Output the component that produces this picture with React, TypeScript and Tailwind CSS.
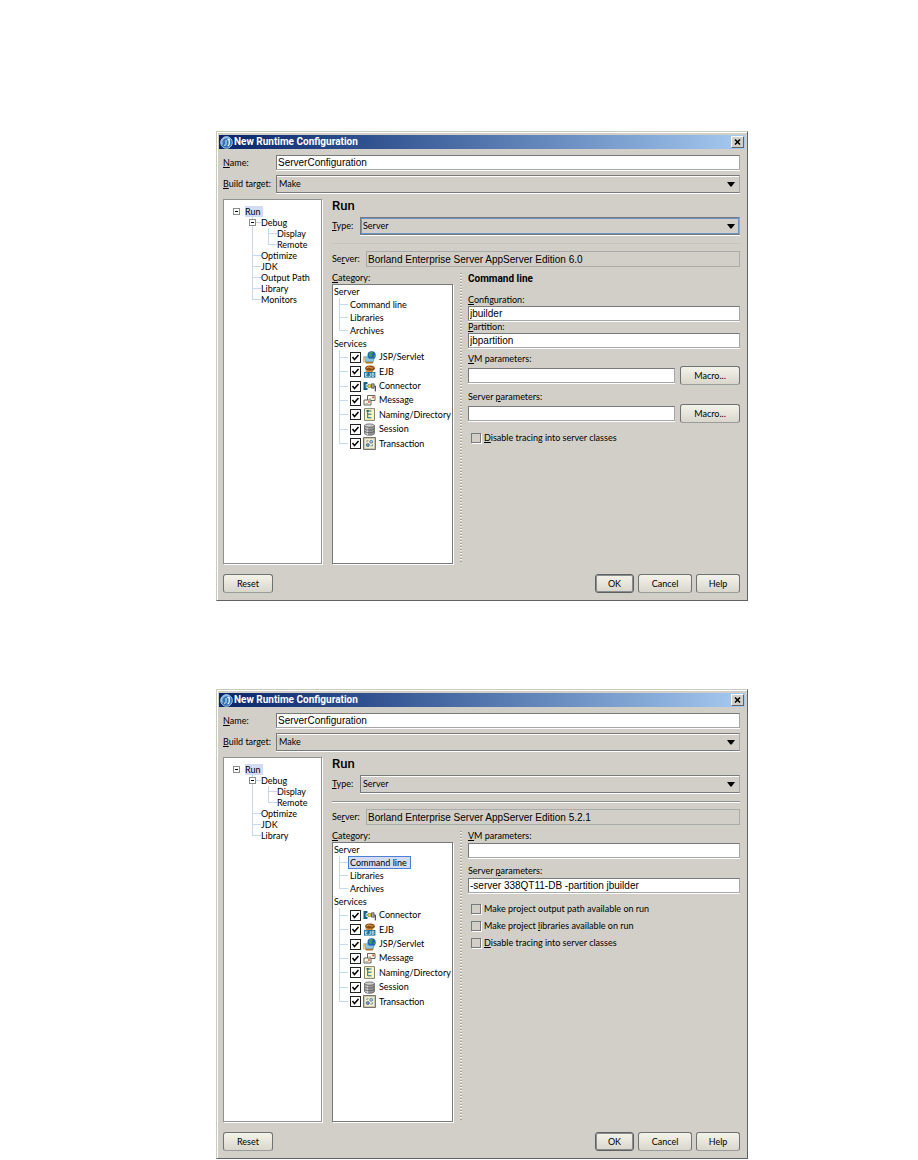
import { useId, type ReactNode } from "react";
import clsx from "clsx";

/* ------------------------------------------------------------------ */
/* Data                                                                */
/* ------------------------------------------------------------------ */

type Guide = "none" | "pipe" | "tee" | "elbow";

type TreeRow = {
  label: string;
  guides: Guide[];
  open?: boolean;
  selected?: boolean;
};

type ServiceName =
  | "JSP/Servlet"
  | "EJB"
  | "Connector"
  | "Message"
  | "Naming/Directory"
  | "Session"
  | "Transaction";

const treeTop: TreeRow[] = [
  { label: "Run", guides: ["none"], open: true, selected: true },
  { label: "Debug", guides: ["none", "tee"], open: true },
  { label: "Display", guides: ["none", "pipe", "tee"] },
  { label: "Remote", guides: ["none", "pipe", "elbow"] },
  { label: "Optimize", guides: ["none", "tee"] },
  { label: "JDK", guides: ["none", "tee"] },
];

const treeV6: TreeRow[] = [
  ...treeTop,
  { label: "Output Path", guides: ["none", "tee"] },
  { label: "Library", guides: ["none", "tee"] },
  { label: "Monitors", guides: ["none", "elbow"] },
];

const treeV5: TreeRow[] = [...treeTop, { label: "Library", guides: ["none", "elbow"] }];

const servicesV6: ServiceName[] = [
  "JSP/Servlet",
  "EJB",
  "Connector",
  "Message",
  "Naming/Directory",
  "Session",
  "Transaction",
];

const servicesV5: ServiceName[] = [
  "Connector",
  "EJB",
  "JSP/Servlet",
  "Message",
  "Naming/Directory",
  "Session",
  "Transaction",
];

/* ------------------------------------------------------------------ */
/* Icons                                                               */
/* ------------------------------------------------------------------ */

function AppIcon() {
  return (
    <svg viewBox="0 0 13 13" className="size-[13px] shrink-0" aria-hidden="true">
      <circle cx="6.5" cy="6.5" r="5.8" fill="#2f74b8" stroke="#b9cde2" strokeWidth="1" />
      <path d="M2.4 8.5A4.6 4.6 0 0 1 9.5 2.8" stroke="#8fc1ec" strokeWidth="1.5" fill="none" />
      <path d="M6 4v4.4q-.2 1.2-2 .8" stroke="#dcebf8" strokeWidth="1" fill="none" />
      <path d="M7.4 3.6h1.8v4.2q0 1.8-1.6 2.2" stroke="#fff" strokeWidth="1.2" fill="none" />
    </svg>
  );
}

// 13px glyphs, one for each service in the category tree.
const serviceGlyphs: Record<ServiceName, ReactNode> = {
  "JSP/Servlet": (
    <>
      <circle cx="8.6" cy="4.4" r="4.1" fill="#2458cc" />
      <path d="M6 1.4l3-.9 1.2 1.6-1.6 1.2.8 1.8-2 1.4-1.8-2z" fill="#35a050" />
      <path d="M10.8 4l1.6.6-.8 2-1.2-.6z" fill="#35a050" />
      <path d="M1 5.8h3.6l1.4 1.8h5l-1 3.6H2.6z" fill="#8fc4dc" stroke="#3c86a8" strokeWidth=".6" />
      <path d="M0 5.4h1.6v6.2H0z" fill="#e8c070" />
      <path d="M2.2 10.8h8.4l-1 1.6H3z" fill="#a9752c" />
    </>
  ),
  EJB: (
    <>
      <ellipse cx="7" cy="3.3" rx="4.8" ry="2.8" fill="#8a4a12" />
      <path d="M3.5 3.2q2-2 4-.6t3-.5" stroke="#e6b060" strokeWidth="1" fill="none" />
      <path d="M2 5.5h8.5l-1 1.6H3z" fill="#d08a3a" />
      <rect x="1" y="7" width="11.4" height="5.6" fill="#1c7296" />
      <path
        d="M4.5 8.2H2.4v3.2h2.1M2.4 9.8h1.8M7.3 8v3.4H5.5M9 8.2v3.2h1.6q1-.8 0-1.6 1-.8 0-1.6zM9 9.8h1.4"
        stroke="#e2f2f8"
        strokeWidth=".8"
        fill="none"
      />
    </>
  ),
  Connector: (
    <>
      <path d="M.5 2h4v2H3v4h1.5v2h-4z" fill="#145f86" />
      <path d="M2.5 4.5h2v3h-2z" fill="#7cc0dc" />
      <circle cx="6.4" cy="6" r="1.7" fill="#f4e020" stroke="#54541c" strokeWidth=".6" />
      <path d="M8.5 3.8h2.6v4.4H8.5z" fill="#a6a6a6" stroke="#444" strokeWidth=".7" />
      <path d="M11.5 6h.8v5.4" stroke="#222" strokeWidth="1" fill="none" />
    </>
  ),
  Message: (
    <>
      <path d="M4.5 1.5h7.5v5H4.5z" fill="#fffbe6" stroke="#55584c" strokeWidth=".9" />
      <path d="M9.3 2.6h1.6v1.6H9.3z" fill="#c83a2c" />
      <path d="M1 6h7v5H1z" fill="#fffbe6" stroke="#55584c" strokeWidth=".9" />
      <path d="M5.2 7.2h1.6v1.6H5.2z" fill="#c83a2c" />
      <path d="M2.4 9.4h3M6 5h2.4" stroke="#8d9184" strokeWidth=".7" />
    </>
  ),
  "Naming/Directory": (
    <>
      <path d="M1.5.6h10v11.8h-10z" fill="#fbf6c4" stroke="#77765e" strokeWidth=".9" />
      <path d="M4.7 2.5v7.5M4.7 3h3.8M4.7 6.2h3.8M4.7 9.8h3.8" stroke="#206a86" strokeWidth="1" fill="none" />
      <path d="M3.4 2h2.4v1.6H3.4z" fill="#206a86" />
    </>
  ),
  Session: (
    <>
      <path d="M1.6 2.6v7.8c0 2.4 9.8 2.4 9.8 0V2.6z" fill="#9b9b9b" stroke="#4a4a4a" strokeWidth=".7" />
      <path d="M3 4v7.4M4.6 4.4v7.6" stroke="#dedede" strokeWidth="1" />
      <ellipse cx="6.5" cy="2.6" rx="4.9" ry="1.7" fill="#cfcfcf" stroke="#4a4a4a" strokeWidth=".7" />
      <path d="M1.6 5.4c0 2.2 9.8 2.2 9.8 0M1.6 8c0 2.2 9.8 2.2 9.8 0" stroke="#4a4a4a" strokeWidth=".7" fill="none" />
    </>
  ),
  Transaction: (
    <>
      <path d="M.5.5h12v12H.5z" fill="#c9c6b4" stroke="#6c6a5c" strokeWidth=".9" />
      <path d="M2.2 2.2h8.6v8.6H2.2z" fill="#fdf9d8" />
      <circle cx="4.8" cy="8" r="1.6" fill="#6d9cc4" stroke="#224a70" strokeWidth=".6" />
      <circle cx="8.2" cy="4.8" r="1.5" fill="#a8cbe4" stroke="#224a70" strokeWidth=".6" />
      <path d="M7.2 9h2.2V7.2M3.8 5.2V3.8h1.8" stroke="#3c6488" strokeWidth=".7" fill="none" />
    </>
  ),
};

function ServiceIcon({ name }: { name: ServiceName }) {
  return (
    <svg viewBox="0 0 13 13" className="size-[13px] shrink-0" aria-hidden="true">
      {serviceGlyphs[name]}
    </svg>
  );
}

/* ------------------------------------------------------------------ */
/* Form controls                                                       */
/* ------------------------------------------------------------------ */

function TextField({ id, value, readOnly, className }: { id: string; value?: string; readOnly?: boolean; className?: string }) {
  return (
    <input
      id={id}
      type="text"
      defaultValue={value}
      readOnly={readOnly}
      className={clsx(
        "min-w-0 border px-px font-[Liberation_Sans,Arial,sans-serif] text-[10px] leading-3 text-black outline-none",
        readOnly
          ? "h-4 border-[#a9abab] bg-transparent"
          : "h-[15px] border-[#a6a8a8] border-t-[#77797a] border-l-[#77797a] bg-white shadow-[0_1px_0_#fff]",
        className,
      )}
    />
  );
}

function SelectField({ id, value, focused }: { id: string; value: string; focused?: boolean }) {
  return (
    <div className="relative min-w-0 flex-1">
      <select
        id={id}
        defaultValue={value}
        className={clsx(
          "block h-[18px] w-full appearance-none border border-[#77797a] border-r-[#a6a8a8] bg-[#d1cfc7] px-0.5 text-[9px] leading-3 text-black outline-none",
          focused ? "shadow-[inset_0_0_0_1px_#6c92cc,0_1px_0_#fff]" : "shadow-[inset_0_1px_0_#fff,0_1px_0_#fff]",
        )}
      >
        <option>{value}</option>
      </select>
      <svg viewBox="0 0 8 5" className="pointer-events-none absolute top-[7px] right-[5px] h-[5px] w-2" aria-hidden="true">
        <path d="M0 0h8L4.6 4.6h-1.2z" fill="#000" />
      </svg>
    </div>
  );
}

function PushButton({ children, primary, className }: { children: ReactNode; primary?: boolean; className?: string }) {
  return (
    <button
      type="button"
      className={clsx(
        "h-[19px] shrink-0 rounded-[3px] border bg-linear-to-b from-[#f4f3ea] to-[#d9d7cc] text-[9px] leading-3 text-black",
        primary
          ? "border-[#5f6163] shadow-[inset_0_0_0_1px_#8b8d8d]"
          : "border-[#6f7173] border-b-[#9a9c9c]",
        className,
      )}
    >
      {children}
    </button>
  );
}

function OptionBox({ children }: { children: ReactNode }) {
  const id = useId();
  return (
    <div className="flex h-[11px] items-center gap-[3px] pl-[3px]">
      <input
        id={id}
        type="checkbox"
        className="size-[10px] shrink-0 appearance-none border border-[#77797a] bg-transparent shadow-[1px_1px_0_#fff]"
      />
      <label htmlFor={id}>{children}</label>
    </div>
  );
}

function ServiceRow({ name, last }: { name: ServiceName; last: boolean }) {
  const id = useId();
  return (
    <li className="flex items-center pl-1.5">
      <GuideCell kind={last ? "elbow" : "tee"} own />
      <span className="relative ml-0.5 size-[11px] shrink-0">
        <input
          id={id}
          type="checkbox"
          defaultChecked
          className="peer block size-[11px] appearance-none border border-[#222] bg-white"
        />
        <svg viewBox="0 0 11 11" className="pointer-events-none absolute inset-0 hidden peer-checked:block" aria-hidden="true">
          <path d="M2.5 5l2 2.5L8.5 3" stroke="#000" strokeWidth="1.5" fill="none" />
        </svg>
      </span>
      <label htmlFor={id} className="ml-0.5 flex items-center gap-[3px]">
        <ServiceIcon name={name} />
        {name}
      </label>
    </li>
  );
}

/* ------------------------------------------------------------------ */
/* Trees                                                               */
/* ------------------------------------------------------------------ */

// One column of connector lines; `own` is the column beside the label.
function GuideCell({ kind, own }: { kind: Guide; own?: boolean }) {
  return (
    <span className={clsx("flex shrink-0 flex-col self-stretch", own ? "w-[9px]" : "w-4")}>
      <span
        className={clsx(
          "flex-1 border-[#c6d8ea]",
          kind !== "none" && "border-l",
          (kind === "tee" || kind === "elbow") && "border-b",
        )}
      />
      <span className={clsx("flex-1 border-[#c6d8ea]", (kind === "tee" || kind === "pipe") && "border-l")} />
    </span>
  );
}

function NavTree({ rows }: { rows: TreeRow[] }) {
  return (
    <ul className="w-[99px] shrink-0 border border-[#8f9192] bg-white pt-1.5 pl-3 shadow-[1px_1px_0_#fff]">
      {rows.map((row) => (
        <li key={row.label} className="flex h-[11px] items-center leading-[11px]">
          {row.guides.slice(0, -1).map((kind, i) => (
            <GuideCell key={i} kind={kind} />
          ))}
          <span className="relative flex self-stretch">
            <GuideCell kind={row.guides[row.guides.length - 1]} own />
            {row.open && (
              <span className="absolute top-0.5 -left-[3px] flex size-[7px] items-center justify-center border border-[#8a8c8c] bg-white">
                <span className="h-px w-[3px] bg-black" />
              </span>
            )}
          </span>
          <span className={clsx(row.selected && "bg-[#d3dcf4] pr-0.5")}>{row.label}</span>
        </li>
      ))}
    </ul>
  );
}

function CategoryTree({ services, selected }: { services: ServiceName[]; selected?: string }) {
  const pages = ["Command line", "Libraries", "Archives"];
  return (
    <div className="flex-1 border border-[#77797a] bg-white shadow-[1px_1px_0_#fff]">
      <p className="h-[13px] pl-px leading-[13px]">Server</p>
      <ul>
        {pages.map((page, i) => (
          <li key={page} className="flex h-[13px] items-center pl-1.5 leading-[11px]">
            <GuideCell kind={i === pages.length - 1 ? "elbow" : "tee"} own />
            <span
              className={clsx(
                "border px-px",
                page === selected ? "border-[#4f7fd0] bg-[#d3dcf4] pr-[3px]" : "border-transparent",
              )}
            >
              {page}
            </span>
          </li>
        ))}
      </ul>
      <p className="h-[13px] pl-px leading-[13px]">Services</p>
      <ul className="grid h-[101px] auto-rows-fr">
        {services.map((name, i) => (
          <ServiceRow key={name} name={name} last={i === services.length - 1} />
        ))}
      </ul>
    </div>
  );
}

/* ------------------------------------------------------------------ */
/* Dialog                                                              */
/* ------------------------------------------------------------------ */

type DialogProps = {
  tree: TreeRow[];
  server: string;
  services: ServiceName[];
  selectedPage?: string;
  typeFocused?: boolean;
  children: ReactNode;
};

function RuntimeDialog({ tree, server, services, selectedPage, typeFocused, children }: DialogProps) {
  const id = useId();
  return (
    <section className="border border-[#c9cbbd] border-r-[#606366] border-b-[#606366] bg-[#d1cfc7] px-0.5 pt-[3px] pb-[7px] shadow-[inset_1px_1px_0_#fff]">
      <header className="flex h-[14px] items-center bg-linear-to-r from-[#0a246a] to-[#a6caf0] pr-px pl-px">
        <AppIcon />
        <h2 className="ml-px flex-1 font-[Roboto,sans-serif] text-[10px] leading-[14px] font-bold text-white">
          New Runtime Configuration
        </h2>
        <button
          type="button"
          aria-label="Close"
          className="flex h-3 w-[13px] items-center justify-center border border-white border-r-[#606366] border-b-[#606366] bg-[#d1cfc7]"
        >
          <svg viewBox="0 0 7 6" className="h-1.5 w-[7px]" aria-hidden="true">
            <path d="M1 .5l5 5M6 .5l-5 5" stroke="#000" strokeWidth="1.5" />
          </svg>
        </button>
      </header>

      <div className="pt-1.5 pr-[5px] pl-1">
        <div className="flex items-center">
          <label htmlFor={`${id}-name`} className="w-[53px] shrink-0">
            <u>N</u>ame:
          </label>
          <TextField id={`${id}-name`} value="ServerConfiguration" className="flex-1" />
        </div>
        <div className="mt-[5px] flex items-center">
          <label htmlFor={`${id}-target`} className="w-[53px] shrink-0 whitespace-nowrap">
            <u>B</u>uild target:
          </label>
          <SelectField id={`${id}-target`} value="Make" />
        </div>

        <div className="mt-1.5 flex min-h-[365px] gap-[10px]">
          <NavTree rows={tree} />

          <div className="flex min-w-0 flex-1 flex-col">
            <h3 className="h-[18px] font-[Roboto,sans-serif] text-[13px] leading-[14px] font-medium">Run</h3>
            <div className="flex items-center">
              <label htmlFor={`${id}-type`} className="w-7 shrink-0">
                <u>T</u>ype:
              </label>
              <SelectField id={`${id}-type`} value="Server" focused={typeFocused} />
            </div>
            <hr
              className={clsx(
                "mt-2 h-0.5 border-0 border-t",
                typeFocused ? "border-[#c3c3c0]" : "border-[#8f9192] border-b border-b-white",
              )}
            />
            <div className="mt-1.5 flex items-center">
              <label htmlFor={`${id}-server`} className="w-[34px] shrink-0">
                Se<u>r</u>ver:
              </label>
              <TextField id={`${id}-server`} value={server} readOnly className="flex-1" />
            </div>

            <div className="mt-1 flex flex-1">
              <div className="flex w-[121px] shrink-0 flex-col">
                <p className="h-[13px] leading-[13px]">
                  <u>C</u>ategory:
                </p>
                <CategoryTree services={services} selected={selectedPage} />
              </div>
              <div className="mr-[6px] ml-[7px] my-0.5 w-0.5 bg-[repeating-linear-gradient(#a3a3a0_0_1px,#f4f4f0_1px_2px,transparent_2px_3px)]" />
              <div className="flex min-w-0 flex-1 flex-col">{children}</div>
            </div>
          </div>
        </div>

        <footer className="mt-[10px] flex gap-1">
          <PushButton className="mr-auto w-[50px]">Reset</PushButton>
          <PushButton primary className="w-[39px]">
            OK
          </PushButton>
          <PushButton className="w-[54px]">Cancel</PushButton>
          <PushButton className="w-11">Help</PushButton>
        </footer>
      </div>
    </section>
  );
}

function CommandLineV6() {
  const id = useId();
  return (
    <>
      <h4 className="h-4 font-[Roboto,sans-serif] text-[10px] leading-4 font-bold">Command line</h4>
      <label htmlFor={`${id}-config`} className="mt-[7px]">
        <u>C</u>onfiguration:
      </label>
      <TextField id={`${id}-config`} value="jbuilder" />
      <label htmlFor={`${id}-partition`}>
        <u>P</u>artition:
      </label>
      <TextField id={`${id}-partition`} value="jbpartition" />
      <label htmlFor={`${id}-vm`} className="mt-[5px] mb-px">
        <u>V</u>M parameters:
      </label>
      <div className="flex items-center gap-[5px]">
        <TextField id={`${id}-vm`} className="flex-1" />
        <PushButton className="w-[60px]">Macro...</PushButton>
      </div>
      <label htmlFor={`${id}-params`} className="mt-1.5 mb-px">
        Server <u>p</u>arameters:
      </label>
      <div className="flex items-center gap-[5px]">
        <TextField id={`${id}-params`} className="flex-1" />
        <PushButton className="w-[60px]">Macro...</PushButton>
      </div>
      <div className="mt-[9px]">
        <OptionBox>
          <u>D</u>isable tracing into server classes
        </OptionBox>
      </div>
    </>
  );
}

function CommandLineV5() {
  const id = useId();
  return (
    <>
      <label htmlFor={`${id}-vm`} className="mt-px mb-px">
        <u>V</u>M parameters:
      </label>
      <TextField id={`${id}-vm`} />
      <label htmlFor={`${id}-params`} className="mt-[7px] mb-px">
        Server <u>p</u>arameters:
      </label>
      <TextField id={`${id}-params`} value="-server 338QT11-DB -partition jbuilder" />
      <div className="mt-[10px] flex flex-col gap-1.5">
        <OptionBox>
          Make pro<u>j</u>ect output path available on run
        </OptionBox>
        <OptionBox>
          Make project <u>l</u>ibraries available on run
        </OptionBox>
        <OptionBox>
          <u>D</u>isable tracing into server classes
        </OptionBox>
      </div>
    </>
  );
}

export default function App() {
  return (
    <main className="flex min-h-screen flex-col gap-[88px] bg-white pt-[131px] pr-[170px] pl-[216px] font-[Lato,Liberation_Sans,sans-serif] text-[9px] leading-3 text-black">
      <RuntimeDialog
        tree={treeV6}
        server="Borland Enterprise Server AppServer Edition 6.0"
        services={servicesV6}
        typeFocused
      >
        <CommandLineV6 />
      </RuntimeDialog>
      <RuntimeDialog
        tree={treeV5}
        server="Borland Enterprise Server AppServer Edition 5.2.1"
        services={servicesV5}
        selectedPage="Command line"
      >
        <CommandLineV5 />
      </RuntimeDialog>
    </main>
  );
}
